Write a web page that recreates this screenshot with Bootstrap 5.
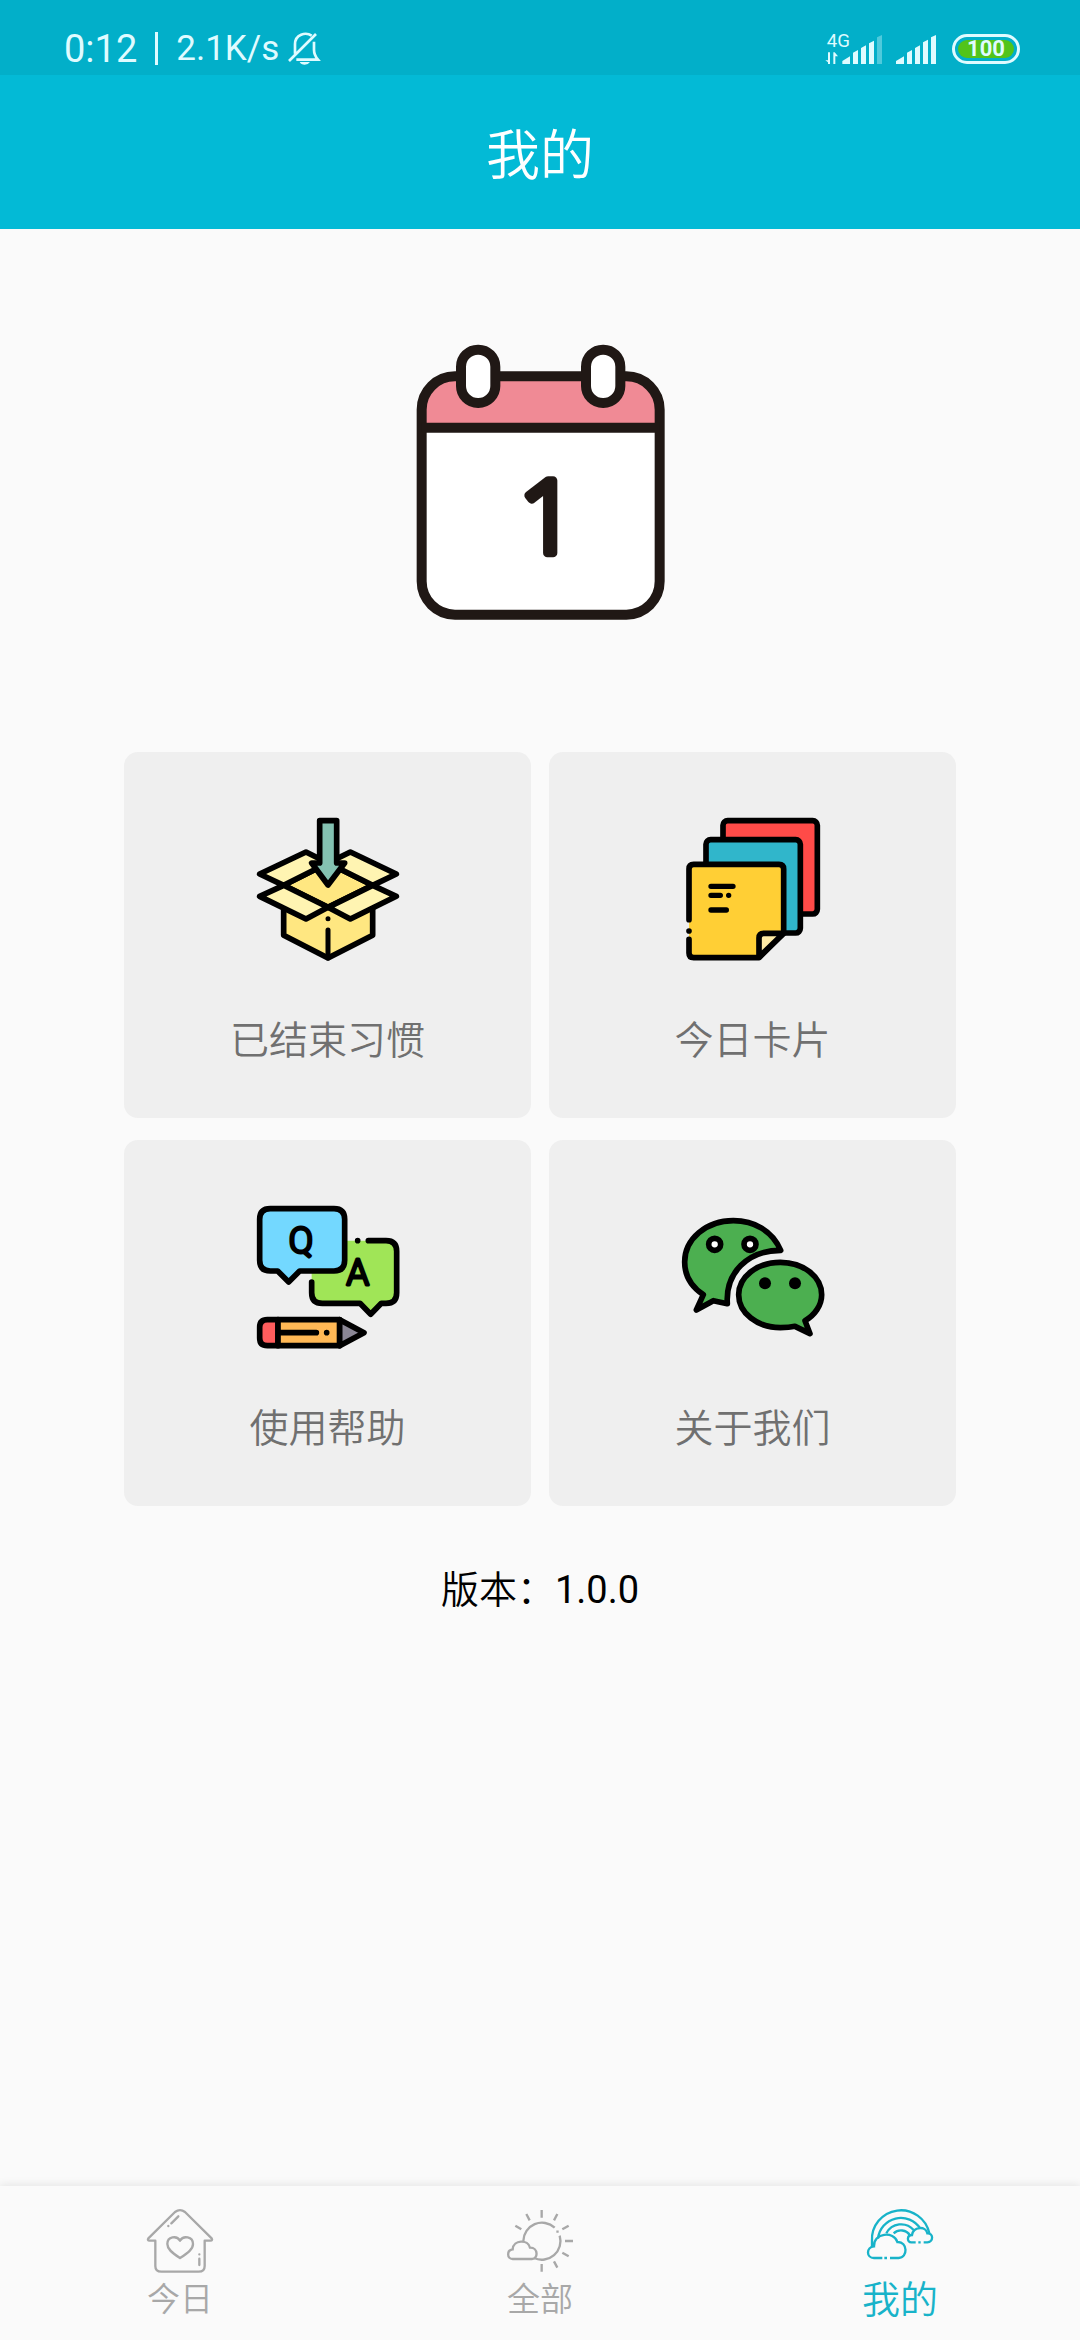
<!DOCTYPE html>
<html lang="zh-CN">
<head>
<meta charset="utf-8">
<meta name="viewport" content="width=device-width, initial-scale=1">
<title>我的</title>
<link href="https://cdn.jsdelivr.net/npm/bootstrap@5.3.0/dist/css/bootstrap.min.css" rel="stylesheet">
<style>
  body { background: #fafafa; color: #000; font-family: Roboto, "Noto Sans CJK SC", sans-serif; font-size: 39px; font-weight: 350; line-height: 58px; }
  svg { display: block; flex: none; overflow: visible; }
  .ink { stroke-linecap: round; stroke-linejoin: round; }
  .status-bar { background: #02afc9; color: #dffbff; height: 75px; padding: 22px 60px 0 64px; }
  .status-left { gap: 18px; font-weight: 400; line-height: 54px; }
  .clock { font-size: 38px; }
  .speed { font-size: 35px; gap: 8px; }
  .divider { width: 3px; height: 33px; background: currentColor; }
  .status-right { gap: 15px; }
  .battery { width: 68px; height: 30px; border: 3px solid #dffbff; border-radius: 15px; padding: 3px; }
  .battery-level { background: #52c41a; border-radius: 9px; font-size: 22px; font-weight: 700; line-height: 18px; }
  .title-bar { background: #03bad6; color: #fff; height: 154px; padding-top: 10px; }
  .title-bar h1 { font-size: 54px; font-weight: 350; line-height: 80px; }
  .page-main { padding: 115px 124px 0; }
  .logo { margin-bottom: 132px; }
  .tiles { --bs-gutter-x: 18px; --bs-gutter-y: 22px; }
  .tile { background: #efefef; color: #707070; border: 0; border-radius: 14px; padding: 65px 0 48px; gap: 51px; }
  .version { margin-top: 55px; font-size: 38px; font-weight: 400; }
  .version span { font-weight: 350; }
  .tab-bar { background: #fafafa; height: 154px; padding-top: 20px; box-shadow: 0 -2px 8px rgba(0, 0, 0, .08); }
  .tab-bar a { color: #a8a8a8; gap: 2px; font-size: 33px; line-height: 40px; }
  .tab-bar a.active { color: #18b3c9; font-size: 38px; }
</style>
<script src="https://cdn.jsdelivr.net/npm/bootstrap@5.3.0/dist/js/bootstrap.bundle.min.js" defer></script>
</head>
<body class="d-flex flex-column min-vh-100">
<header>
  <div class="status-bar d-flex justify-content-between align-items-center">
    <div class="status-left d-flex align-items-center">
      <span class="clock">0:12</span>
      <span class="divider"></span>
      <span class="speed d-flex align-items-center">2.1K/s
        <svg width="34" height="34" viewBox="739 91 102 102" fill="none" stroke="currentColor" stroke-width="8" aria-hidden="true">
          <path d="M745 178 826 97M763 156V128C763 98 795 90 813 102M820 120V144Q820 160 832 174H767"/>
          <path d="M777 181H808Q803 189 792 189T777 181Z" fill="currentColor" stroke="none"/>
        </svg>
      </span>
    </div>
    <div class="status-right d-flex align-items-center">
      <svg width="112" height="32" viewBox="75 90 336 96" fill="currentColor" aria-hidden="true">
        <text x="80" y="132" font-size="56" font-weight="400">4G</text>
        <path d="M84 148h6v35h-6V178l-8-6h8zM100 148l4 0 10 12h-8v23h-6z"/>
        <path d="M127 183v-9l23-14v23zM159 183v-34l15-8v42zM183 183v-48l15-8v56zM207 183v-62l15-8v70z"/>
        <path d="M231 183v-80l15-7v87z" opacity=".35"/>
        <path d="M288 183v-9l24-14v23zM321 183v-34l15-8v42zM345 183v-48l15-8v56zM369 183v-65l15-8v73zM393 183v-80l15-7v87z"/>
      </svg>
      <div class="battery"><div class="battery-level text-center">100</div></div>
    </div>
  </div>
  <div class="title-bar d-flex align-items-center justify-content-center"><h1 class="m-0">我的</h1></div>
</header>

<main class="page-main flex-grow-1">
  <svg class="logo mx-auto" width="251" height="276" viewBox="75 72 753 828" role="img" aria-label="日历">
    <rect x="95" y="169" width="714" height="715" rx="100" fill="#fff"/>
    <path d="M95 323V269Q95 169 195 169H709Q809 169 809 269V323Z" fill="#f08a95"/>
    <g fill="none" stroke="#201815" stroke-width="30">
      <rect x="95" y="169" width="714" height="715" rx="100"/>
      <path d="M95 323H809"/>
      <rect x="213" y="89" width="103" height="160" rx="51" fill="#fff"/>
      <rect x="588" y="89" width="103" height="160" rx="51" fill="#fff"/>
    </g>
    <text class="ink" x="387" y="700" font-family="Noto Sans" font-size="302" font-weight="300" fill="#201815" stroke="#201815" stroke-width="26">1</text>
  </svg>

  <div>
    <div class="row row-cols-2 tiles">
      <div class="col">
        <a href="#finished" class="tile card align-items-center text-decoration-none">
          <svg class="ink" width="144" height="144" viewBox="436 232 432 432" stroke="#000" stroke-width="17" aria-hidden="true">
            <path d="M519 480V587L652 655 786 587V480L652 503Z" fill="#ffe781"/>
            <path d="M519 437 652 370 786 437 652 503Z" fill="#ffe781"/>
            <path d="M447 403 586 337 652 370 519 437ZM857 403 719 337 652 370 786 437ZM447 470 519 437 652 503 586 538ZM857 470 786 437 652 503 719 538Z" fill="#fff4b2"/>
            <path d="M652 537v.1M652 571V655" stroke-width="15"/>
            <path d="M627 243H678V370H702L652 436 603 370H627Z" fill="#84c2b2"/>
          </svg>
          <span>已结束习惯</span>
        </a>
      </div>
      <div class="col">
        <a href="#cards" class="tile card align-items-center text-decoration-none">
          <svg class="ink" width="144" height="144" viewBox="421 232 432 432" stroke="#000" stroke-width="17" aria-hidden="true">
            <rect x="547" y="243" width="283" height="280" rx="14" fill="#ff4b48"/>
            <rect x="496" y="300" width="283" height="280" rx="14" fill="#30b6cb"/>
            <path d="M445 388q0-14 14-14H715q14 0 14 14V580L655 654H459q-14 0-14-14Z" fill="#ffcf35" stroke="none"/>
            <path d="M445 540V388q0-14 14-14H715q14 0 14 14V580L655 654H459q-14 0-14-14V599M445 574v.1" fill="none"/>
            <path d="M655 652V595q0-14 14-14H729Z" fill="#ffeba5"/>
            <path d="M511 440H577M511 467H539M564 467v.1M511 511H557" fill="none" stroke-width="16"/>
          </svg>
          <span>今日卡片</span>
        </a>
      </div>
      <div class="col">
        <a href="#help" class="tile card align-items-center text-decoration-none">
          <svg class="ink" width="144" height="144" viewBox="436 226 432 432" stroke="#000" stroke-width="17" aria-hidden="true">
            <path d="M603 333H826Q858 333 858 365V489Q858 521 826 521H812L780 554 748 521H635Q603 521 603 489Z" fill="#a0e557" stroke="none"/>
            <path d="M773 333H826Q858 333 858 365V489Q858 521 826 521H812L780 554 748 521H635Q603 521 603 489V457M741 333v.1" fill="none"/>
            <path d="M479 237H670Q702 237 702 269V392Q702 424 670 424H567L534 457 501 424H479Q447 424 447 392V269Q447 237 479 237Z" fill="#73d8ff"/>
            <path d="M470 570H502V648H470Q447 648 447 625V593Q447 570 470 570Z" fill="#ff5d5d"/>
            <path d="M502 570H687V648H502Z" fill="#ffb855"/>
            <path d="M687 570 760 609 687 648Z" fill="#8b8796"/>
            <path d="M510 609H617M648 609v.1"/>
            <g font-size="108" font-weight="300" text-anchor="middle" stroke-width="9"><text x="571" y="369">Q</text><text x="741" y="465">A</text></g>
          </svg>
          <span>使用帮助</span>
        </a>
      </div>
      <div class="col">
        <a href="#about" class="tile card align-items-center text-decoration-none">
          <svg class="ink" width="144" height="144" viewBox="421 226 432 432" fill="#4caf50" stroke="#000" stroke-width="17" aria-hidden="true">
            <path d="M488 495C450 470 432 435 432 397 432 328 497 273 578 273 640 273 695 303 720 362 620 362 554 430 560 522L518 513 467 541Z"/>
            <path d="M763 590C750 593 735 594 719 594 650 594 594 550 594 495 594 441 650 398 719 398 788 398 843 441 843 495 843 527 822 557 793 573L808 612Z"/>
            <g fill="#fff"><circle cx="522" cy="344" r="18"/><circle cx="628" cy="344" r="18"/></g>
            <g fill="#000" stroke="none"><circle cx="673" cy="461" r="18"/><circle cx="763" cy="461" r="18"/></g>
          </svg>
          <span>关于我们</span>
        </a>
      </div>
    </div>
  </div>
  <p class="version mb-0 text-center"><span>版本：</span>1.0.0</p>
</main>

<nav class="tab-bar d-flex" aria-label="主导航">
  <a href="#today" class="d-flex flex-column align-items-center flex-fill w-100 text-decoration-none">
    <svg class="ink" width="72" height="72" viewBox="132 108 216 216" fill="none" stroke="currentColor" stroke-width="7" aria-hidden="true">
      <path d="M166 212H149Q141 211 145 205L225 126Q240 115 255 126L335 205Q339 211 331 212H314V288Q314 305 296 305H184Q166 305 166 288Z"/>
      <path d="M240 264C215 248 202 237 202 222 202 200 230 195 240 212 250 195 279 200 279 222 279 237 265 248 240 264ZM214 160 235 139M205 168v.1M298 266V285M298 253v.1"/>
    </svg>
    <span>今日</span>
  </a>
  <a href="#all" class="d-flex flex-column align-items-center flex-fill w-100 text-decoration-none">
    <svg width="72" height="72" viewBox="132 108 216 216" fill="none" stroke="currentColor" stroke-width="7" aria-hidden="true">
      <path d="M190 213A56 56 0 0 1 284 173M299 197A56 56 0 0 1 222 264M289 185h7"/>
      <path d="M158 267C140 267 140 240 158 238 160 208 205 208 210 233 235 232 235 267 216 267Z"/>
      <path d="M245 120V143M245 282V305M315 213H339M199 132 209 151M292 132 282 151M166 167 184 178M326 167 307 178M307 248 326 259M282 274 292 293"/>
    </svg>
    <span>全部</span>
  </a>
  <a href="#me" class="active d-flex flex-column align-items-center flex-fill w-100 text-decoration-none" aria-current="page">
    <svg width="72" height="72" viewBox="132 108 216 216" fill="none" stroke="currentColor" stroke-width="7" aria-hidden="true">
      <path d="M156 230V213A87 87 0 0 1 328 190M174 206A69 69 0 0 1 301 176M199 190A50 50 0 0 1 281 180M221 190A32 32 0 0 1 270 196"/>
      <path d="M187 264H162C138 264 138 231 162 229 160 188 222 182 232 216 264 214 264 264 236 264H210M193 264h8"/>
      <path d="M287 217H274C260 217 260 195 276 195 280 168 318 168 322 190 341 188 341 217 322 217H311M295 217h7"/>
    </svg>
    <span>我的</span>
  </a>
</nav>
</body>
</html>
